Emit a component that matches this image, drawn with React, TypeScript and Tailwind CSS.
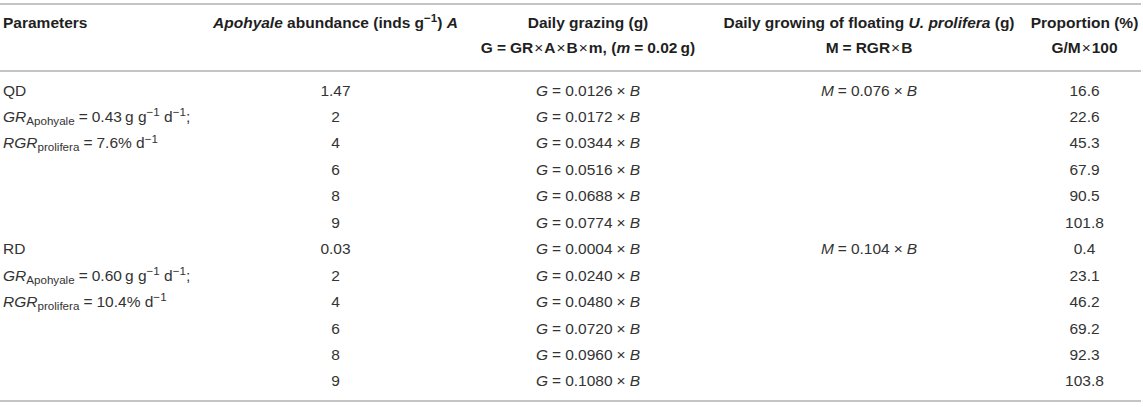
import React from 'react';

type Row = {
  param?: React.ReactNode;
  a: string;
  g: string;
  m?: string;
  p: string;
};

const Eq = () => <span className="mx-[4px]">=</span>;
const X = () => <span className="mx-[4px]">×</span>;
const HEq = () => <span className="mx-[4px]">=</span>;
const Times = () => <span className="mx-[1px] font-normal">×</span>;

const Gr: React.FC<{ v: string }> = ({ v }) => (
  <>
    <i>GR</i>
    <sub>Apohyale</sub>
    <Eq />
    {v}&#8201;g g<sup>−1</sup> d<sup>−1</sup>;
  </>
);

const Rgr: React.FC<{ v: string }> = ({ v }) => (
  <>
    <i>RGR</i>
    <sub>prolifera</sub>
    <Eq />
    {v}% d<sup>−1</sup>
  </>
);

const groups: Row[][] = [
  [
    { param: 'QD', a: '1.47', g: '0.0126', m: '0.076', p: '16.6' },
    { param: <Gr v="0.43" />, a: '2', g: '0.0172', p: '22.6' },
    { param: <Rgr v="7.6" />, a: '4', g: '0.0344', p: '45.3' },
    { a: '6', g: '0.0516', p: '67.9' },
    { a: '8', g: '0.0688', p: '90.5' },
    { a: '9', g: '0.0774', p: '101.8' },
  ],
  [
    { param: 'RD', a: '0.03', g: '0.0004', m: '0.104', p: '0.4' },
    { param: <Gr v="0.60" />, a: '2', g: '0.0240', p: '23.1' },
    { param: <Rgr v="10.4" />, a: '4', g: '0.0480', p: '46.2' },
    { a: '6', g: '0.0720', p: '69.2' },
    { a: '8', g: '0.0960', p: '92.3' },
    { a: '9', g: '0.1080', p: '103.8' },
  ],
];

export default function App() {
  const rows = groups.flat();
  const last = rows.length - 1;
  return (
    <div className="bg-white w-[1143px] h-[407px] pt-[3px] font-['Liberation_Sans',Arial,sans-serif] text-[#333]">
      <table className="w-[1141px] table-fixed border-collapse">
        <colgroup>
          <col className="w-[205px]" />
          <col className="w-[261px]" />
          <col className="w-[244px]" />
          <col className="w-[318px]" />
          <col className="w-[113px]" />
        </colgroup>
        <thead>
          <tr className="border-t-2 border-b-2 border-[#c4c4c4] align-top text-[15.5px] font-bold text-[#1f1f1f] leading-[25px]">
            <th className="text-left pl-[3px] pt-[5px] pb-[10px] font-bold">Parameters</th>
            <th className="text-center pt-[5px] pb-[10px] font-bold whitespace-nowrap">
              <i>Apohyale</i> abundance (inds g<sup>−1</sup>) <i>A</i>
            </th>
            <th className="text-center pt-[5px] pb-[10px] font-bold whitespace-nowrap">
              <div>Daily grazing (g)</div>
              <div>
                G<HEq />GR<Times />A<Times />B<Times />m, (<i>m</i>
                <HEq />
                0.02&#8201;g)
              </div>
            </th>
            <th className="text-center pt-[5px] pb-[10px] font-bold whitespace-nowrap">
              <div>
                Daily growing of floating <i>U. prolifera</i> (g)
              </div>
              <div>
                M<HEq />RGR<Times />B
              </div>
            </th>
            <th className="text-center pt-[5px] pb-[10px] font-bold whitespace-nowrap">
              <div>Proportion (%)</div>
              <div>
                G/M<Times />100
              </div>
            </th>
          </tr>
        </thead>
        <tbody className="border-b-2 border-[#c4c4c4] text-[15.5px]">
          {rows.map((r, i) => {
            const pad = i === 0 ? 'pt-[6px]' : i === last ? 'pb-[7px]' : '';
            const h = i === 0 ? 'h-[32.45px]' : i === last ? 'h-[33.45px]' : 'h-[26.45px]';
            return (
              <tr key={i} className={`${h} align-middle`}>
                <td className={`pl-[3px] whitespace-nowrap ${pad}`}>{r.param}</td>
                <td className={`text-center ${pad}`}>{r.a}</td>
                <td className={`text-center whitespace-nowrap ${pad}`}>
                  <i>G</i>
                  <Eq />
                  {r.g}
                  <X />
                  <i>B</i>
                </td>
                <td className={`text-center whitespace-nowrap ${pad}`}>
                  {r.m && (
                    <>
                      <i>M</i>
                      <Eq />
                      {r.m}
                      <X />
                      <i>B</i>
                    </>
                  )}
                </td>
                <td className={`text-center ${pad}`}>{r.p}</td>
              </tr>
            );
          })}
        </tbody>
      </table>
    </div>
  );
}
